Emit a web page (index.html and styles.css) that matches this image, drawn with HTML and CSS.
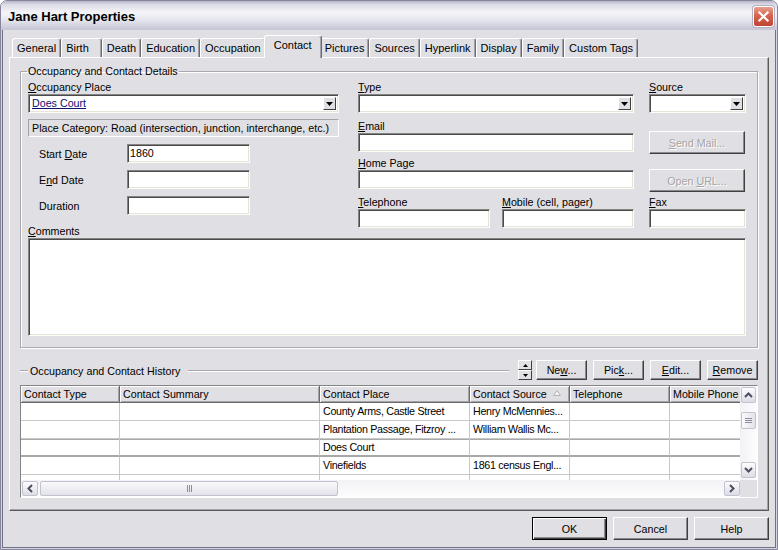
FILE: index.html
```html
<!DOCTYPE html>
<html lang="en">
<head>
  <meta charset="UTF-8">
  <title>Jane Hart Properties</title>
  <link rel="stylesheet" href="styles.css">
</head>
<body>
  <div class="window">
    <div class="titlebar">
      <span class="title">Jane Hart Properties</span>
      <button class="close-btn" aria-label="Close">
        <svg width="21" height="21" viewBox="0 0 21 21"><path d="M6 6 L15 15 M15 6 L6 15" stroke="#fff" stroke-width="2.4" stroke-linecap="square"/></svg>
      </button>
    </div>

    <div class="client">
      <div class="tabs">
        <div class="tab">General</div>
        <div class="tab tab-birth">Birth</div>
        <div class="tab">Death</div>
        <div class="tab">Education</div>
        <div class="tab">Occupation</div>
        <div class="tab active">Contact</div>
        <div class="tab">Pictures</div>
        <div class="tab">Sources</div>
        <div class="tab">Hyperlink</div>
        <div class="tab">Display</div>
        <div class="tab">Family</div>
        <div class="tab">Custom Tags</div>
      </div>

      <div class="page">
        <fieldset class="group">
          <legend>Occupancy and Contact Details</legend>
          <div class="details">
            <div class="col col-left">
              <label class="lbl"><u>O</u>ccupancy Place</label>
              <div class="combo">
                <span class="combo-text link">Does Court</span>
                <span class="drop-btn"><svg width="7" height="4" viewBox="0 0 7 4"><path d="M0 0 H7 L3.5 4 Z" fill="#000"/></svg></span>
              </div>
              <div class="category">Place Category: Road (intersection, junction, interchange, etc.)</div>
              <div class="date-row first">
                <label>Start <u>D</u>ate</label>
                <div class="textbox date-box">1860</div>
              </div>
              <div class="date-row">
                <label>E<u>n</u>d Date</label>
                <div class="textbox date-box"></div>
              </div>
              <div class="date-row">
                <label>Duration</label>
                <div class="textbox date-box"></div>
              </div>
              <label class="lbl comments-lbl"><u>C</u>omments</label>
            </div>

            <div class="col col-mid">
              <label class="lbl"><u>T</u>ype</label>
              <div class="combo">
                <span class="combo-text"></span>
                <span class="drop-btn"><svg width="7" height="4" viewBox="0 0 7 4"><path d="M0 0 H7 L3.5 4 Z" fill="#000"/></svg></span>
              </div>
              <label class="lbl gap-7"><u>E</u>mail</label>
              <div class="textbox"></div>
              <label class="lbl gap-5"><u>H</u>ome Page</label>
              <div class="textbox"></div>
              <div class="phone-row gap-7">
                <div>
                  <label class="lbl"><u>T</u>elephone</label>
                  <div class="textbox"></div>
                </div>
                <div>
                  <label class="lbl"><u>M</u>obile (cell, pager)</label>
                  <div class="textbox"></div>
                </div>
              </div>
            </div>

            <div class="col col-right">
              <label class="lbl"><u>S</u>ource</label>
              <div class="combo">
                <span class="combo-text"></span>
                <span class="drop-btn"><svg width="7" height="4" viewBox="0 0 7 4"><path d="M0 0 H7 L3.5 4 Z" fill="#000"/></svg></span>
              </div>
              <button class="btn side-btn send-btn" disabled><u>S</u>end Mail...</button>
              <button class="btn side-btn url-btn" disabled>Open <u>U</u>RL...</button>
              <label class="lbl fax-lbl"><u>F</u>ax</label>
              <div class="textbox"></div>
            </div>
          </div>
          <div class="textbox comments"></div>
        </fieldset>

        <div class="history-head">
          <span class="rule rule-start"></span>
          <span class="history-title">Occupancy and Contact History</span>
          <span class="rule rule-fill"></span>
          <div class="spinner">
            <span class="spin-half"><svg width="5" height="3" viewBox="0 0 5 3"><path d="M0 3 H5 L2.5 0 Z" fill="#000"/></svg></span>
            <span class="spin-half"><svg width="5" height="3" viewBox="0 0 5 3"><path d="M0 0 H5 L2.5 3 Z" fill="#000"/></svg></span>
          </div>
          <button class="btn small-btn">Ne<u>w</u>...</button>
          <button class="btn small-btn">Pic<u>k</u>...</button>
          <button class="btn small-btn"><u>E</u>dit...</button>
          <button class="btn small-btn"><u>R</u>emove</button>
        </div>

        <div class="listview">
          <div class="lv-view">
            <div class="lv-row lv-header">
              <div class="lv-head">Contact Type</div>
              <div class="lv-head">Contact Summary</div>
              <div class="lv-head">Contact Place</div>
              <div class="lv-head sorted">Contact Source
                <svg class="sort-arrow" width="8" height="6" viewBox="0 0 8 6"><path d="M0.5 5.5 H7.5 L4 0.5 Z" fill="#f4f4f4" stroke="#b4b4b4"/></svg>
              </div>
              <div class="lv-head">Telephone</div>
              <div class="lv-head">Mobile Phone</div>
            </div>
            <div class="lv-row">
              <div class="lv-cell"></div>
              <div class="lv-cell"></div>
              <div class="lv-cell">County Arms, Castle Street</div>
              <div class="lv-cell">Henry McMennies...</div>
              <div class="lv-cell"></div>
              <div class="lv-cell"></div>
            </div>
            <div class="lv-row">
              <div class="lv-cell"></div>
              <div class="lv-cell"></div>
              <div class="lv-cell">Plantation Passage, Fitzroy ...</div>
              <div class="lv-cell">William Wallis Mc...</div>
              <div class="lv-cell"></div>
              <div class="lv-cell"></div>
            </div>
            <div class="lv-row current">
              <div class="lv-cell"></div>
              <div class="lv-cell"></div>
              <div class="lv-cell">Does Court</div>
              <div class="lv-cell"></div>
              <div class="lv-cell"></div>
              <div class="lv-cell"></div>
            </div>
            <div class="lv-row">
              <div class="lv-cell"></div>
              <div class="lv-cell"></div>
              <div class="lv-cell">Vinefields</div>
              <div class="lv-cell">1861 census Engl...</div>
              <div class="lv-cell"></div>
              <div class="lv-cell"></div>
            </div>
            <div class="lv-row">
              <div class="lv-cell"></div>
              <div class="lv-cell"></div>
              <div class="lv-cell"></div>
              <div class="lv-cell"></div>
              <div class="lv-cell"></div>
              <div class="lv-cell"></div>
            </div>
          </div>

          <div class="vscroll">
            <span class="sb-btn"><svg width="9" height="6" viewBox="0 0 9 6"><path d="M1 5 L4.5 1.5 L8 5" fill="none" stroke="#4d4d60" stroke-width="2"/></svg></span>
            <span class="sb-thumb v-thumb"><svg width="7" height="5" viewBox="0 0 7 5"><path d="M0 0.5 H7 M0 2.5 H7 M0 4.5 H7" stroke="#8c8ca0"/></svg></span>
            <span class="sb-space"></span>
            <span class="sb-btn"><svg width="9" height="6" viewBox="0 0 9 6"><path d="M1 1 L4.5 4.5 L8 1" fill="none" stroke="#4d4d60" stroke-width="2"/></svg></span>
          </div>

          <div class="hscroll">
            <span class="sb-btn"><svg width="6" height="9" viewBox="0 0 6 9"><path d="M5 1 L1.5 4.5 L5 8" fill="none" stroke="#4d4d60" stroke-width="2"/></svg></span>
            <span class="sb-thumb h-thumb"><svg width="5" height="7" viewBox="0 0 5 7"><path d="M0.5 0 V7 M2.5 0 V7 M4.5 0 V7" stroke="#8c8ca0"/></svg></span>
            <span class="sb-space"></span>
            <span class="sb-btn"><svg width="6" height="9" viewBox="0 0 6 9"><path d="M1 1 L4.5 4.5 L1 8" fill="none" stroke="#4d4d60" stroke-width="2"/></svg></span>
          </div>
          <div class="sb-corner"></div>
        </div>
      </div>

      <div class="dialog-buttons">
        <button class="btn dialog-btn default">OK</button>
        <button class="btn dialog-btn">Cancel</button>
        <button class="btn dialog-btn">Help</button>
      </div>
    </div>
  </div>
</body>
</html>
```

FILE: styles.css
```css
body {
  margin: 0;
  background: #ffffff;
  font-family: "Liberation Sans", Arial, sans-serif;
  font-size: 10.7px;
  color: #000;
}
u {
  text-decoration: underline;
  text-underline-offset: 1px;
}
.window {
  width: 778px;
  height: 550px;
  box-sizing: border-box;
  border: 1px solid #85859c;
  border-radius: 7px 7px 0 0;
  background: #e0dfe3;
  display: flex;
  flex-direction: column;
  overflow: hidden;
}

/* title bar */
.titlebar {
  flex: none;
  height: 29px;
  display: flex;
  align-items: center;
  justify-content: space-between;
  padding: 0 3px 0 7px;
  background: linear-gradient(to bottom, #b4b4c8 0%, #dcdce6 12%, #f4f4f8 40%, #e6e6ee 65%, #c4c4d4 100%);
}
.title {
  font-weight: bold;
  font-size: 13px;
  margin-top: 1px;
}
.close-btn {
  width: 21px;
  height: 21px;
  padding: 0;
  border: 1px solid #fff;
  border-radius: 3px;
  background: linear-gradient(to bottom, #e8a08c 0%, #d66450 45%, #c04432 100%);
  box-shadow: 0 0 0 1px #b0b0c0;
  display: flex;
  align-items: center;
  justify-content: center;
  margin-top: 1px;
}

/* client area */
.client {
  flex: 1;
  display: flex;
  flex-direction: column;
  padding: 5px 7px 0;
  border: solid #d5d5df;
  border-width: 0 1px 1px;
  box-shadow: inset 1px 0 #70708a, inset -1px 0 #70708a, inset 0 -1px #70708a;
}

/* tabs */
.tabs {
  display: flex;
  align-items: flex-end;
  height: 22px;
  padding-left: 3px;
}
.tab {
  height: 19px;
  box-sizing: border-box;
  padding: 0 4px;
  font-size: 11px;
  line-height: 18px;
  border: 1px solid;
  border-color: #fff #6a6a6a transparent #fff;
  border-bottom: 0;
  box-shadow: inset -1px 0 #a4a4a8;
  border-radius: 3px 3px 0 0;
  white-space: nowrap;
}
.tab-birth {
  padding-right: 12px;
}
.tab.active {
  height: 23px;
  margin: 0 -2px -1px;
  padding: 0 9px;
  line-height: 18px;
  background: #e0dfe3;
  position: relative;
  z-index: 1;
}

/* tab page */
.page {
  flex: none;
  height: 454px;
  box-sizing: border-box;
  border: 1px solid;
  border-color: #fff #5a5a5a #5a5a5a #fff;
  box-shadow: inset -1px -1px #a4a4a8;
  padding: 7px 10px 0 10px;
}
.group {
  margin: 0;
  min-width: 0;
  padding: 3px 11px 11px 7px;
  border: 1px solid #a8a8b0;
  box-shadow: inset 1px 1px #fff, 1px 1px #fff;
}
.group legend {
  padding: 0 1px;
  margin-left: -1px;
  line-height: 13px;
}
.details {
  display: flex;
}
.col {
  display: flex;
  flex-direction: column;
}
.col-left {
  width: 311px;
}
.col-mid {
  width: 276px;
  margin-left: 19px;
}
.col-right {
  flex: 1;
  margin-left: 15px;
}
.lbl {
  display: block;
  height: 13px;
  line-height: 13px;
  white-space: nowrap;
}
.gap-7 {
  margin-top: 7px;
}
.gap-5 {
  margin-top: 5px;
}

/* inputs */
.combo,
.textbox {
  height: 19px;
  box-sizing: border-box;
  border: 1px solid;
  border-color: #848484 #fdfdf8 #fdfdf8 #848484;
  box-shadow: inset 1px 1px #4a4a4a, inset -1px -1px #e6e4da;
  background: #fff;
}
.combo {
  display: flex;
  align-items: center;
  padding: 2px;
}
.combo-text {
  flex: 1;
  padding-left: 1px;
  line-height: 13px;
}
.link {
  color: #10106e;
  text-decoration: underline;
}
.drop-btn {
  width: 13px;
  height: 13px;
  box-sizing: border-box;
  border: 1px solid;
  border-color: #fff #404040 #404040 #fff;
  background: #e0dfe3;
  display: flex;
  align-items: center;
  justify-content: center;
}
.textbox {
  padding: 0 2px;
  line-height: 17px;
}
.category {
  margin-top: 6px;
  height: 18px;
  box-sizing: border-box;
  border: 1px solid;
  border-color: #a4a4a8 #fff #fff #a4a4a8;
  padding: 0 3px;
  line-height: 16px;
  white-space: nowrap;
}
.date-row {
  display: flex;
  align-items: center;
  height: 19px;
  margin-top: 7px;
  padding-left: 11px;
}
.date-row label {
  width: 88px;
}
.date-box {
  width: 123px;
}
.comments-lbl {
  margin-top: 10px;
}
.comments {
  height: 98px;
}
.phone-row {
  display: grid;
  grid-template-columns: 1fr 1fr;
  column-gap: 12px;
}

/* buttons */
.btn {
  font: inherit;
  color: #000;
  padding: 0;
  box-sizing: border-box;
  background: #e0dfe3;
  border: 1px solid;
  border-color: #fff #404040 #404040 #fff;
  box-shadow: inset -1px -1px #8a8a8e;
  white-space: nowrap;
}
.btn:disabled {
  color: #a4a4a8;
  text-shadow: 1px 1px #fff;
}
.side-btn {
  width: 96px;
  height: 23px;
}
.send-btn {
  margin-top: 18px;
}
.url-btn {
  margin-top: 15px;
}
.fax-lbl {
  margin-top: 4px;
}

/* history header */
.history-head {
  display: flex;
  align-items: center;
  height: 20px;
  margin-top: 12px;
}
.rule {
  height: 0;
  margin-top: 2px;
  border-top: 1px solid #a8a8b0;
  border-bottom: 1px solid #fff;
}
.rule-start {
  width: 8px;
  margin-right: 2px;
}
.rule-fill {
  flex: 1;
  margin-left: 8px;
  margin-right: 9px;
}
.history-title {
  white-space: nowrap;
  margin-top: 1px;
}
.spinner {
  display: flex;
  flex-direction: column;
  width: 14px;
  height: 20px;
  margin-right: 4px;
}
.spin-half {
  flex: 1;
  box-sizing: border-box;
  border: 1px solid;
  border-color: #fff #404040 #404040 #fff;
  display: flex;
  align-items: center;
  justify-content: center;
}
.small-btn {
  width: 51px;
  height: 20px;
  margin-right: 6px;
}
.small-btn:last-child {
  margin-right: 0;
}

/* list view */
.listview {
  margin-top: 5px;
  height: 113px;
  box-sizing: border-box;
  border: 1px solid;
  border-color: #848484 #fff #fff #848484;
  display: grid;
  grid-template-columns: 1fr 17px;
  grid-template-rows: 1fr 17px;
  background: #fff;
}
.lv-view {
  overflow: hidden;
  background: #fff;
}
.lv-row {
  display: grid;
  grid-template-columns: 99px 200px 150px 100px 100px 100px;
  width: 749px;
}
.lv-head {
  height: 17px;
  box-sizing: border-box;
  background: #e0dfe3;
  border-right: 1px solid #6a6a6a;
  border-bottom: 1px solid #6a6a6a;
  box-shadow: inset 1px 1px #fff, inset -1px -1px #a4a4a8;
  padding: 0 3px;
  line-height: 16px;
  white-space: nowrap;
  overflow: hidden;
}
.sorted {
  display: flex;
  justify-content: space-between;
  align-items: center;
}
.sort-arrow {
  margin-right: 5px;
  margin-top: -2px;
}
.lv-cell {
  height: 18px;
  box-sizing: border-box;
  border-right: 1px solid #c8c8c8;
  border-bottom: 1px solid #c8c8c8;
  padding: 0 2px 0 3px;
  line-height: 17px;
  letter-spacing: -0.3px;
  white-space: nowrap;
  overflow: hidden;
}
.lv-row.current .lv-cell {
  border-bottom: 2px solid #a8a8a8;
  box-shadow: inset 0 1px #a8a8a8;
  line-height: 16px;
}

/* scroll bars */
.vscroll,
.hscroll {
  display: flex;
  background: linear-gradient(to right, #f2f2f6, #fdfdfd);
}
.vscroll {
  flex-direction: column;
  padding: 1px 1px 2px;
}
.hscroll {
  padding: 1px 0 1px 1px;
  background: linear-gradient(to bottom, #f2f2f6, #fdfdfd);
}
.sb-btn,
.sb-thumb {
  box-sizing: border-box;
  border: 1px solid #c2c2d0;
  border-radius: 2px;
  display: flex;
  align-items: center;
  justify-content: center;
}
.sb-btn {
  width: 15px;
  height: 16px;
  background: linear-gradient(to bottom, #fdfdfe, #dcdce6);
}
.hscroll .sb-btn {
  width: 16px;
  height: 15px;
}
.sb-thumb {
  background: linear-gradient(to right, #fafafc, #e2e2ea);
}
.v-thumb {
  height: 17px;
  margin-top: 9px;
}
.h-thumb {
  width: 298px;
  margin-left: 2px;
  background: linear-gradient(to bottom, #fafafc, #e2e2ea);
}
.sb-space {
  flex: 1;
}
.sb-corner {
  background: #e0dfe3;
}

/* dialog buttons */
.dialog-buttons {
  display: flex;
  justify-content: flex-end;
  gap: 6px;
  margin-top: 6px;
}
.dialog-btn {
  width: 75px;
  height: 23px;
}
.dialog-btn.default {
  border: 1px solid #000;
  box-shadow: inset 1px 1px #fff, inset -1px -1px #404040, inset -2px -2px #8a8a8e;
}
```
